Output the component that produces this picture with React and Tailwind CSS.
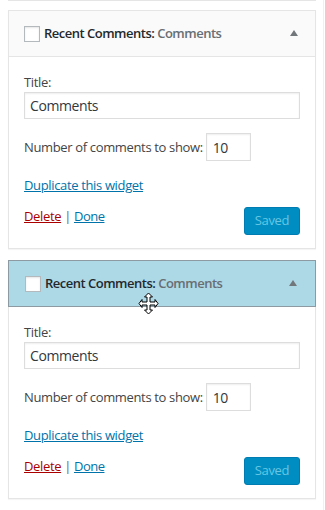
function MoveCursor() {
  return (
    <svg width="21" height="23" viewBox="0 0 21 23" className="absolute left-[129px] top-[31px]">
      <path
        d="M10.5 1 L14.5 5 L12 5 L12 10 L17 10 L17 7.5 L20 11.5 L17 15.5 L17 13 L12 13 L12 18 L14.5 18 L10.5 22 L6.5 18 L9 18 L9 13 L4 13 L4 15.5 L1 11.5 L4 7.5 L4 10 L9 10 L9 5 L6.5 5 Z"
        fill="#fff"
        stroke="#000"
        strokeWidth="1"
        strokeLinejoin="miter"
      />
    </svg>
  );
}

function Widget({ active }) {
  return (
    <div className="relative mx-[8px] w-[308px] border border-[#e5e5e5] bg-white shadow-[0_1px_1px_rgba(0,0,0,0.04)]">
      <div
        className={
          active
            ? "-mx-px -mt-px flex h-[47px] items-center border border-[#8e9aa2] bg-[#add8e6] pl-[16px] pr-[18px]"
            : "flex h-[46px] items-center border-b border-[#e5e5e5] bg-[#fafafa] px-[15px] pr-[17px]"
        }
      >
        <span className="h-[16px] w-[16px] shrink-0 border border-[#b4b9be] bg-white shadow-[inset_0_1px_2px_rgba(0,0,0,0.1)]" />
        <h3 className="ml-[4px] flex-1 text-[13px] font-semibold tracking-[-0.5px] text-[#23282d]">
          Recent Comments: <span className="text-[#686e73]">Comments</span>
        </h3>
        <svg width="8" height="6" viewBox="0 0 8 6" className="mb-[2px]">
          <path d="M4 0 L8 6 L0 6 Z" fill="#72777c" />
        </svg>
      </div>

      <div className="px-[15px] pb-[13px] text-[13px] tracking-[-0.35px] text-[#444]">
        <label className="mt-[16px] block leading-[19px]">Title:</label>
        <div className="flex h-[27px] w-full items-center border border-[#ddd] px-[5px] text-[14px] tracking-[-0.4px] text-[#32373c] shadow-[inset_0_1px_2px_rgba(0,0,0,0.07)]">
          Comments
        </div>

        <div className="mt-[14px] flex items-center">
          <span className="leading-[19px]">Number of comments to show:</span>
          <div className="ml-[3px] flex h-[28px] w-[45px] items-center border border-[#ddd] px-[6px] text-[14px] tracking-[-0.4px] text-[#32373c] shadow-[inset_0_1px_2px_rgba(0,0,0,0.07)]">
            10
          </div>
        </div>

        <div className="mt-[15px] leading-[19px]">
          <a className="text-[#0073aa] underline">Duplicate this widget</a>
        </div>

        <div className="mt-[12px] flex items-start justify-between">
          <div className="flex gap-[3px] leading-[19px]">
            <a className="text-[#a00] underline">Delete</a>
            <span className="text-[#666]">|</span>
            <a className="tracking-[-0.5px] text-[#0073aa] underline">Done</a>
          </div>
          <button className="flex h-[28px] w-[56px] items-center justify-center rounded-[3px] border border-[#007cb2] bg-[#008ec2] text-[13px] text-[#66c6e4]">
            Saved
          </button>
        </div>
      </div>
      {active && <MoveCursor />}
    </div>
  );
}

export default function App() {
  return (
    <div className="min-h-[510px] w-[324px] border-r border-[#f0f0f0] bg-white font-['Open_Sans',sans-serif]">
      <div className="mx-[8px] h-px w-[308px] bg-[#e5e5e5]" />
      <div className="mt-[9px]">
        <Widget />
      </div>
      <div className="mt-[11px]">
        <Widget active />
      </div>
    </div>
  );
}
